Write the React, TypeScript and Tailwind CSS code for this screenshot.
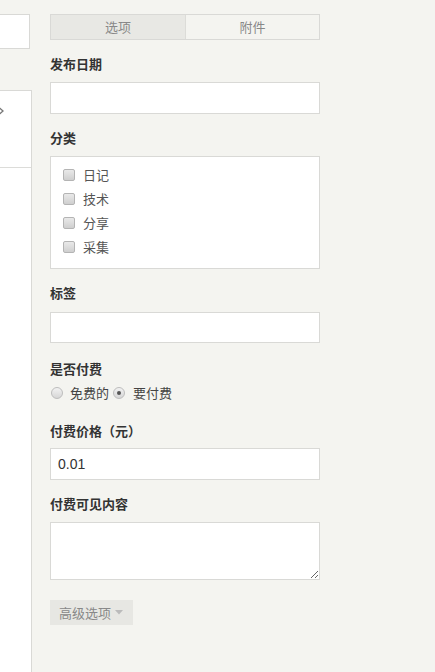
import React from "react";

const font = { fontFamily: '"Noto Sans CJK SC", "Liberation Sans", sans-serif' };

function Label({ children, className = "" }: { children: React.ReactNode; className?: string }) {
  return (
    <div className={`h-[20px] text-[13px] leading-[20px] font-bold text-[#333] ${className}`}>
      {children}
    </div>
  );
}

function Box({ h, children, className = "" }: { h: string; children?: React.ReactNode; className?: string }) {
  return (
    <div className={`w-[270px] ${h} border border-[#d9d9d6] bg-white ${className}`}>{children}</div>
  );
}

function Check({ label }: { label: string }) {
  return (
    <div className="flex h-[24px] items-center">
      <span className="ml-[12px] h-[12px] w-[12px] rounded-[2px] border border-[#b4b4b4] bg-gradient-to-b from-[#e9e9e9] to-[#cfcfcf]" />
      <span className="ml-[8px] text-[13px] text-[#555]">{label}</span>
    </div>
  );
}

function Radio({ on }: { on?: boolean }) {
  return (
    <span className="flex h-[12px] w-[12px] items-center justify-center rounded-full border border-[#bdbdbd] bg-gradient-to-b from-[#f2f2f2] to-[#d6d6d6]">
      {on && <span className="h-[4px] w-[4px] rounded-full bg-[#555]" />}
    </span>
  );
}

export default function App() {
  return (
    <div className="flex h-[672px] w-[435px] overflow-hidden bg-[#f4f4f0]" style={font}>
      {/* clipped left sidebar */}
      <div className="flex w-[32px] shrink-0 flex-col">
        <div className="mt-[14px] h-[35px] w-[30px] border-y border-r border-[#d9d9d6] bg-white" />
        <div className="mt-[41px] flex flex-1 flex-col border-t border-r border-[#d9d9d6] bg-white">
          <div className="relative h-[77px] border-b border-[#dcdcd9]">
            <svg className="absolute left-[-3px] top-[15px]" width="8" height="10" viewBox="0 0 8 10">
              <path d="M2 1.5 L6 5 L2 8.5" fill="none" stroke="#777" strokeWidth="1.3" />
            </svg>
          </div>
        </div>
      </div>

      {/* main form */}
      <div className="ml-[18px] flex flex-col">
        <div className="mt-[14px] flex h-[26px] w-[270px] border border-[#d9d9d6] text-[13px] text-[#888]">
          <div className="flex w-[135px] items-center justify-center border-r border-[#dcdcd8] bg-[#e8e8e4]">选项</div>
          <div className="flex flex-1 items-center justify-center bg-[#f4f4f0]">附件</div>
        </div>

        <Label className="mt-[14px]">发布日期</Label>
        <Box h="h-[32px]" className="mt-[8px]" />

        <Label className="mt-[14px]">分类</Label>
        <Box h="h-[113px]" className="mt-[8px] pt-[6px]">
          <Check label="日记" />
          <Check label="技术" />
          <Check label="分享" />
          <Check label="采集" />
        </Box>

        <Label className="mt-[14px]">标签</Label>
        <Box h="h-[31px]" className="mt-[9px]" />

        <Label className="mt-[16px]">是否付费</Label>
        <div className="mt-[4px] flex h-[20px] items-center text-[13px] text-[#444]">
          <span className="ml-[1px]"><Radio /></span>
          <span className="ml-[7px]">免费的</span>
          <span className="ml-[4px]"><Radio on /></span>
          <span className="ml-[8px]">要付费</span>
        </div>

        <Label className="mt-[18px]">付费价格（元）</Label>
        <Box h="h-[32px]" className="mt-[7px] flex items-center pl-[7px]">
          <span className="text-[14px] text-[#333]" style={{ fontFamily: '"Liberation Sans", Arial, sans-serif' }}>0.01</span>
        </Box>

        <Label className="mt-[14px]">付费可见内容</Label>
        <textarea className="mt-[8px] h-[58px] w-[270px] border border-[#d9d9d6] bg-white outline-none" />

        <div className="mt-[20px] flex h-[25px] w-[83px] items-center bg-[#e7e7e3] pl-[9px] text-[13px] text-[#888]">
          高级选项
          <svg className="ml-[4px]" width="8" height="5" viewBox="0 0 8 5">
            <path d="M0 0 L8 0 L4 4.5 Z" fill="#bbb" />
          </svg>
        </div>
      </div>
    </div>
  );
}
